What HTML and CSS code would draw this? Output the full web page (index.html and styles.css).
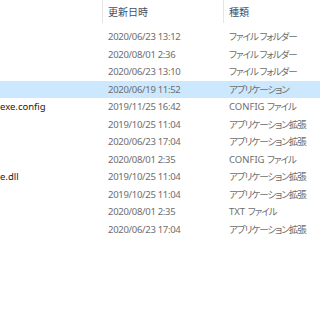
FILE: index.html
```html
<!DOCTYPE html>
<html lang="ja">
	<head>
		<meta charset="UTF-8" />
		<title>エクスプローラー</title>
		<link rel="stylesheet" href="styles.css">
	</head>
	<body>
		<div class="files">
			<div class="files-head">
				<div class="col-name"></div>
				<div class="col-date">更新日時</div>
				<div class="col-type">種類</div>
			</div>
			<ul class="files-list">
				<li><span class="col-name"></span><span class="col-date">2020/06/23 13:12</span><span class="col-type">ファイル フォルダー</span></li>
				<li><span class="col-name"></span><span class="col-date">2020/08/01 2:36</span><span class="col-type">ファイル フォルダー</span></li>
				<li><span class="col-name"></span><span class="col-date">2020/06/23 13:10</span><span class="col-type">ファイル フォルダー</span></li>
				<li class="selected"><span class="col-name"></span><span class="col-date">2020/06/19 11:52</span><span class="col-type">アプリケーション</span></li>
				<li><span class="col-name">exe.config</span><span class="col-date">2019/11/25 16:42</span><span class="col-type"><span class="ext">CONFIG </span>ファイル</span></li>
				<li><span class="col-name"></span><span class="col-date">2019/10/25 11:04</span><span class="col-type">アプリケーション拡張</span></li>
				<li><span class="col-name"></span><span class="col-date">2020/06/23 17:04</span><span class="col-type">アプリケーション拡張</span></li>
				<li><span class="col-name"></span><span class="col-date">2020/08/01 2:35</span><span class="col-type"><span class="ext">CONFIG </span>ファイル</span></li>
				<li><span class="col-name">e.dll</span><span class="col-date">2019/10/25 11:04</span><span class="col-type">アプリケーション拡張</span></li>
				<li><span class="col-name"></span><span class="col-date">2019/10/25 11:04</span><span class="col-type">アプリケーション拡張</span></li>
				<li><span class="col-name"></span><span class="col-date">2020/08/01 2:35</span><span class="col-type"><span class="ext">TXT </span>ファイル</span></li>
				<li><span class="col-name"></span><span class="col-date">2020/06/23 17:04</span><span class="col-type">アプリケーション拡張</span></li>
			</ul>
		</div>
	</body>
</html>
```

FILE: styles.css
```css
* {
	box-sizing: border-box;
}
body {
	margin: 0;
	background: #fff;
	font-family: "Noto Sans", "Noto Sans CJK JP", sans-serif;
	font-size: 9.5px;
}

.files {
	width: 320px;
	height: 320px;
	overflow: hidden;
}

.files-head {
	display: grid;
	grid-template-columns: 102px 121px 1fr;
	height: 28px;
}

.files-head div {
	height: 23px;
	line-height: 24px;
	color: #3f5068;
	font-size: 10px;
}

.files-head .col-date,
.files-head .col-type {
	border-left: 1px solid #e5e5e5;
	padding-left: 5px;
}

.files-list {
	margin: 0;
	padding: 0;
	list-style: none;
}

.files-list li {
	display: grid;
	grid-template-columns: 102px 121px 1fr;
	height: 17.5px;
	line-height: 17.5px;
	white-space: nowrap;
}

.files-list li.selected {
	background: #cce8ff;
}

.col-name {
	color: #1a1a1a;
	overflow: hidden;
}

.files-list .col-date {
	padding-left: 6px;
	color: #6d6d6d;
	letter-spacing: -0.3px;
}

.files-list .col-type {
	padding-left: 6px;
	color: #6d6d6d;
	font-feature-settings: "palt";
	letter-spacing: -1px;
}

.files-list .ext {
	letter-spacing: 0;
}
```
